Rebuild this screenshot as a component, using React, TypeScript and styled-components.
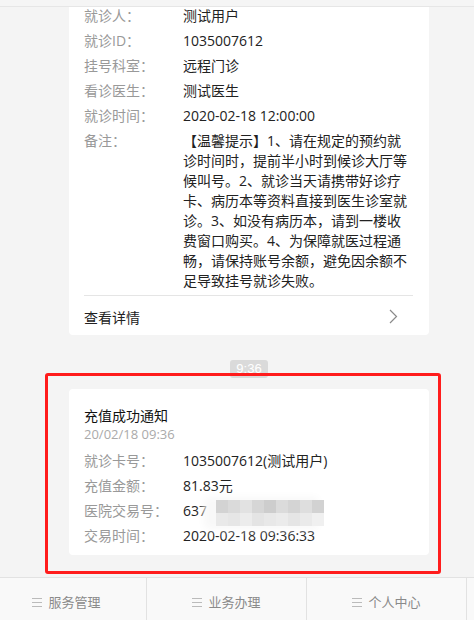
import styled, { createGlobalStyle } from "styled-components";

const GlobalStyle = createGlobalStyle`
  html, body {
    margin: 0;
    padding: 0;
    background: #f4f4f4;
  }
  body {
    font-family: "Open Sans", "Noto Sans CJK SC", sans-serif;
    font-size: 14px;
    color: #222;
  }
`;

const visitRows = [
  { label: "就诊人：", value: "测试用户" },
  { label: "就诊ID：", value: "1035007612" },
  { label: "挂号科室：", value: "远程门诊" },
  { label: "看诊医生：", value: "测试医生" },
  { label: "就诊时间：", value: "2020-02-18 12:00:00" },
  {
    label: "备注：",
    value:
      "【温馨提示】1、请在规定的预约就诊时间时，提前半小时到候诊大厅等候叫号。2、就诊当天请携带好诊疗卡、病历本等资料直接到医生诊室就诊。3、如没有病历本，请到一楼收费窗口购买。4、为保障就医过程通畅，请保持账号余额，避免因余额不足导致挂号就诊失败。",
  },
];

const mosaic = [
  "#d3d3d3", "#dadada", "#e2e2e2", "#d6d6d6", "#cdcdcd", "#dbdbdb", "#d4d4d4", "#dedede", "#d2d2d2",
  "#e9e9e9", "#e6e6e6", "#ececec", "#e4e4e4", "#e8e8e8", "#ebebeb", "#e5e5e5", "#eaeaea", "#f0f0f0",
];

const tabs = ["服务管理", "业务办理", "个人中心"];

export default function App() {
  return (
    <Page>
      <GlobalStyle />
      <Header />
      <Feed>
        <Card $top="3.5px">
          {visitRows.map((r) => (
            <Row key={r.label}>
              <Label>{r.label}</Label>
              <Value>{r.value}</Value>
            </Row>
          ))}
          <Footer>
            <span>查看详情</span>
            <svg width="9" height="15" viewBox="0 0 9 15">
              <path d="M1 1 L7.5 7.5 L1 14" fill="none" stroke="#8a8a8a" strokeWidth="1.2" />
            </svg>
          </Footer>
        </Card>

        <TimeBadge>9:36</TimeBadge>

        <Notice>
          <Card $top="17px" $bottom="7px">
            <Title>充值成功通知</Title>
            <Stamp>20/02/18 09:36</Stamp>
            <Rows>
              <Row>
                <Label>就诊卡号：</Label>
                <Value>1035007612(测试用户)</Value>
              </Row>
              <Row>
                <Label>充值金额：</Label>
                <Value>81.83元</Value>
              </Row>
              <Row>
                <Label>医院交易号：</Label>
                <Value>
                  637
                  <Mosaic>
                    {mosaic.map((c, i) => (
                      <Cell key={i} $c={c} />
                    ))}
                  </Mosaic>
                </Value>
              </Row>
              <Row>
                <Label>交易时间：</Label>
                <Value>2020-02-18 09:36:33</Value>
              </Row>
            </Rows>
          </Card>
          <Highlight />
        </Notice>
      </Feed>

      <TabBar>
        {tabs.map((t) => (
          <Tab key={t}>
            <Burger>
              <i />
              <i />
              <i />
            </Burger>
            {t}
          </Tab>
        ))}
      </TabBar>
    </Page>
  );
}

const Page = styled.div`
  height: 100vh;
  display: flex;
  flex-direction: column;
  overflow: hidden;
`;

const Header = styled.div`
  position: fixed;
  top: 0;
  left: 0;
  right: 0;
  height: 6px;
  background: #f5f5f5;
  border-bottom: 1px solid #e6e6e6;
  z-index: 2;
`;

const Feed = styled.div`
  margin-left: 69px;
  width: 360px;
  display: flex;
  flex-direction: column;
  align-items: center;
`;

const Card = styled.div<{ $top: string; $bottom?: string }>`
  align-self: stretch;
  background: #fff;
  border-radius: 4px;
  padding: ${(p) => p.$top} 16px ${(p) => p.$bottom || "0"} 15px;
`;

const Row = styled.div`
  display: flex;
  padding: 2.5px 0;
  line-height: 20px;
`;

const Label = styled.div`
  width: 99px;
  flex-shrink: 0;
  color: #999;
`;

const Value = styled.div`
  flex: 1;
  color: #222;
  display: flex;
  align-items: center;
  flex-wrap: wrap;
  word-break: break-all;
`;

const Footer = styled.div`
  margin-top: 1.5px;
  border-top: 1px solid #e5e5e5;
  height: 40px;
  display: flex;
  align-items: center;
  justify-content: space-between;
  padding: 2px 15px 0 0;
  box-sizing: border-box;
  color: #222;
`;

const TimeBadge = styled.div`
  margin-top: 25px;
  height: 18px;
  line-height: 18px;
  padding: 0 6px;
  border-radius: 3px;
  background: #dadada;
  color: #fff;
  font-family: "Liberation Sans", sans-serif;
  font-size: 13px;
`;

const Notice = styled.div`
  position: relative;
  align-self: stretch;
  margin-top: 11px;
`;

const Title = styled.div`
  line-height: 20px;
  color: #111;
`;

const Stamp = styled.div`
  line-height: 16px;
  font-size: 13px;
  color: #aaa;
`;

const Rows = styled.div`
  margin-top: 6px;
`;

const Mosaic = styled.span`
  display: inline-grid;
  grid-template-columns: repeat(9, 12px);
  grid-auto-rows: 13px;
  margin: -1px 0 -5px 9px;
  filter: blur(0.6px);
  box-shadow: -9px 0 8px 3px #f8f8f8;
`;

const Cell = styled.span<{ $c: string }>`
  background: ${(p) => p.$c};
`;

const Highlight = styled.div`
  position: absolute;
  top: -16px;
  left: -24px;
  right: -12px;
  bottom: -19px;
  border: 3px solid #ff1c1c;
  border-radius: 3px;
  pointer-events: none;
`;

const TabBar = styled.div`
  margin-top: auto;
  margin-left: -13px;
  height: 42px;
  display: flex;
  background: #f9f9f9;
  border-top: 1px solid #e2e2e2;
  flex-shrink: 0;
`;

const Tab = styled.div`
  width: 160px;
  flex-shrink: 0;
  box-sizing: border-box;
  border-right: 1px solid #e2e2e2;
  display: flex;
  justify-content: center;
  align-items: flex-start;
  padding-top: 14px;
  line-height: 20px;
  font-size: 13px;
  color: #8a8a8a;
  gap: 6px;
`;

const Burger = styled.span`
  display: flex;
  flex-direction: column;
  gap: 3px;
  margin-top: 6px;
  i {
    display: block;
    width: 10px;
    height: 1px;
    background: #bbb;
  }
`;
